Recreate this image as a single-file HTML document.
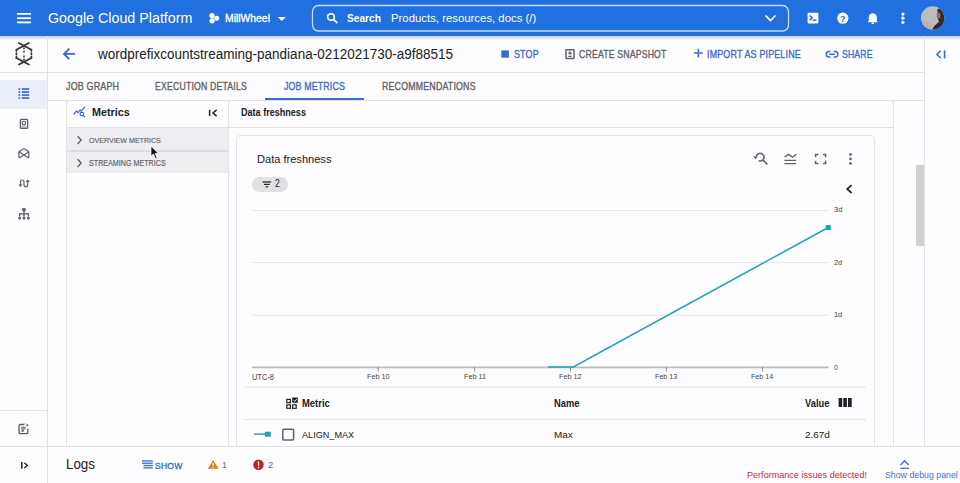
<!DOCTYPE html>
<html><head><meta charset="utf-8">
<style>
*{box-sizing:border-box;margin:0;padding:0}
html,body{width:960px;height:483px;overflow:hidden;background:#fdfcfe;font-family:"Liberation Sans",sans-serif;color:#202124}
.a{position:absolute}
.t{position:absolute;white-space:nowrap;line-height:1}
.h{position:absolute;height:1px;background:#e3e3e7}
.v{position:absolute;width:1px;background:#e3e3e7}
svg{position:absolute;overflow:visible}
</style></head><body>
<!-- top bar -->
<div class="a" style="left:0;top:0;width:960px;height:36px;background:#2070e0"></div>
<div class="a" style="left:0;top:36px;width:960px;height:4px;background:linear-gradient(rgba(0,0,0,0.2),rgba(0,0,0,0))"></div>
<svg style="left:0;top:0" width="960" height="36">
 <rect x="17" y="13" width="14" height="1.8" fill="#fff"/>
 <rect x="17" y="17.3" width="14" height="1.8" fill="#fff"/>
 <rect x="17" y="21.5" width="14" height="1.8" fill="#fff"/>
 <circle cx="212" cy="15.5" r="2.6" fill="#fff"/>
 <circle cx="212" cy="20.8" r="2.6" fill="#fff"/>
 <circle cx="216.7" cy="18.2" r="2.5" fill="#fff"/>
 <path d="M277.7 16.9 L285.8 16.9 L281.75 21 Z" fill="#fff"/>
 <rect x="312.5" y="5.5" width="476" height="25.5" rx="6" fill="none" stroke="#c9dcf8" stroke-width="1.3"/>
 <circle cx="331" cy="17" r="3.3" fill="none" stroke="#fff" stroke-width="1.6"/>
 <path d="M333.4 19.4 L337.2 23" stroke="#fff" stroke-width="1.8"/>
 <path d="M765.5 15.5 L770.5 20.5 L775.5 15.5" fill="none" stroke="#fff" stroke-width="1.7"/>
 <rect x="807.6" y="12.8" width="10.8" height="10.6" rx="1" fill="#fff"/>
 <path d="M809.6 15.5 L812.2 17.8 L809.6 20.1" fill="none" stroke="#2070e0" stroke-width="1.5"/>
 <rect x="812.6" y="19.4" width="3.8" height="1.5" fill="#2070e0"/>
 <circle cx="842.8" cy="18.2" r="5.6" fill="#fff"/>
 <text x="842.8" y="21.6" font-family="Liberation Sans" font-weight="bold" font-size="9" fill="#2070e0" text-anchor="middle">?</text>
 <path d="M868.8 21 L868.8 17.5 Q868.8 13.6 872.8 13.3 Q876.8 13.6 876.8 17.5 L876.8 21 L878 22.2 L867.6 22.2 Z" fill="#fff"/>
 <rect x="871.5" y="22.6" width="2.6" height="1.3" rx="0.6" fill="#fff"/>
 <circle cx="902.9" cy="14.1" r="1.6" fill="#fff"/>
 <circle cx="902.9" cy="18.2" r="1.6" fill="#fff"/>
 <circle cx="902.9" cy="22.3" r="1.6" fill="#fff"/>
</svg>
<svg style="left:0;top:0" width="960" height="36">
 <defs><clipPath id="av"><circle cx="932.6" cy="17.9" r="11.7"/></clipPath></defs>
 <g clip-path="url(#av)">
  <rect x="920" y="5" width="26" height="26" fill="#bdbdc0"/>
  <path d="M937.5 9 Q941 8 943 11 L945 20 L945 30 L932 30 Q934 25 939 22 Q937 18 937.5 13 Z" fill="#2e2a2a"/>
  <ellipse cx="938.6" cy="15.5" rx="2" ry="3" fill="#9a6a62"/>
  <path d="M922 19 L924 27 L933 30 L932 24 L927 22 Z" fill="#c8a898" opacity="0.7"/>
 </g>
</svg>

<!-- frame lines -->
<div class="h" style="left:0;top:72px;width:924px"></div>
<div class="h" style="left:48px;top:100px;width:876px"></div>
<div class="v" style="left:47px;top:36px;height:447px"></div>
<div class="v" style="left:924px;top:36px;height:411px"></div>
<div class="h" style="left:0;top:410px;width:47px"></div>


<!-- rail -->
<div class="a" style="left:0;top:80px;width:47px;height:29px;background:#e9eef9"></div>
<svg style="left:0;top:0" width="48" height="483">
 <g fill="none" stroke="#333" stroke-width="1.7" stroke-linecap="round">
  <path d="M18.9 42.9 L31.4 49.8 M28.9 42.9 L16.4 49.8"/>
  <path d="M16.4 57.9 L28.9 64.6 M31.4 57.9 L18.9 64.6"/>
  <path d="M16.4 49.8 L16.4 51 M16.4 53.2 L16.4 54.4 M16.4 56.6 L16.4 57.9 M31.4 49.8 L31.4 51 M31.4 53.2 L31.4 54.4 M31.4 56.6 L31.4 57.9"/>
  <path d="M24 48.2 L24 48.6 M24 51.4 L24 51.8 M24 56.2 L24 56.6 M24 59.3 L24 59.7"/>
 </g>
 <g fill="#3a6bd0">
  <rect x="18.5" y="88.2" width="1.7" height="1.7"/><rect x="21.8" y="88.2" width="7.4" height="1.7"/>
  <rect x="18.5" y="91.2" width="1.7" height="1.7"/><rect x="21.8" y="91.2" width="7.4" height="1.7"/>
  <rect x="18.5" y="94.2" width="1.7" height="1.7"/><rect x="21.8" y="94.2" width="7.4" height="1.7"/>
  <rect x="18.5" y="97.2" width="1.7" height="1.7"/><rect x="21.8" y="97.2" width="7.4" height="1.7"/>
 </g>
 <g fill="none" stroke="#5f6368" stroke-width="1.4">
  <rect x="20.4" y="119.4" width="7.2" height="8.8" rx="0.8"/>
  <circle cx="23.9" cy="123" r="1.7" stroke-width="1.1"/>
  <path d="M22.3 126 L25.5 126" stroke-width="0.8"/>
  <path d="M18.9 158 L18.9 151.7 L23.9 148.6 L28.8 151.7 L28.8 158 M19.3 151.9 L28.6 158 M28.6 151.9 L19.1 158" stroke-width="1.2"/>
  <path d="M20.5 185 L20.5 182 Q20.5 180 22.25 180 Q24 180 24 182 L24 184.8 Q24 186.8 25.85 186.8 Q27.7 186.8 27.7 184.8 L27.7 181.5" stroke-width="1.2"/>
 </g>
 <path d="M18.4 184.4 L22.6 184.4 L20.5 187 Z M25.6 182 L29.8 182 L27.7 179.3 Z" fill="#5f6368"/>
 <g fill="#5f6368">
  <circle cx="23.9" cy="209.6" r="1.95"/>
  <rect x="23.3" y="210" width="1.4" height="4"/>
  <rect x="19" y="213.2" width="10" height="1.3"/>
  <rect x="19" y="213.5" width="1.3" height="3"/><rect x="23.3" y="213.5" width="1.4" height="3"/><rect x="27.7" y="213.5" width="1.3" height="3"/>
  <circle cx="19.6" cy="218" r="1.5"/><circle cx="24" cy="218" r="1.5"/><circle cx="28.4" cy="218" r="1.5"/>
 </g>
 <g fill="none" stroke="#5f6368" stroke-width="1.4">
  <path d="M24.4 424.5 L20.3 424.5 Q19.1 424.5 19.1 425.7 L19.1 432.4 Q19.1 433.6 20.3 433.6 L26.6 433.6 Q27.8 433.6 27.8 432.4 L27.8 428.8"/>
  <path d="M21.2 427.4 L25.6 427.4 M21.2 428.8 L25.6 428.8 M21.5 430.3 L24 430.3 M21.5 431.5 L23.5 431.5" stroke-width="1.2" stroke="#777"/>
  <path d="M27.3 424.1 L27.3 426.5 M26.1 425.3 L28.5 425.3 M25.3 423.2 L25.8 423.7" stroke-width="0.9"/>
 </g>

</svg>

<!-- header icons -->
<svg style="left:0;top:0" width="960" height="100">
 <path d="M75 53.9 L64.2 53.9 M69.3 48.6 L64 53.9 L69.3 59.2" fill="none" stroke="#3567cc" stroke-width="1.8"/>
 <rect x="501.3" y="50.4" width="7.6" height="7.3" fill="#3a6bd0"/>
 <rect x="566" y="49.8" width="8" height="8.6" rx="0.3" fill="none" stroke="#5f6368" stroke-width="1.5"/>
 <path d="M570 51.3 L570 55 M568.2 53.2 L571.8 53.2 M568.3 56.3 L571.7 56.3" fill="none" stroke="#5f6368" stroke-width="1.2"/>
 <path d="M698.3 48.8 L698.3 57.6 M693.8 53.1 L702.8 53.1" stroke="#3a6bd0" stroke-width="1.5"/>
 <path d="M830.5 51.6 L828.6 51.6 Q826.3 51.6 826.3 54.25 Q826.3 56.9 828.6 56.9 L830.5 56.9 M833.6 51.6 L835.5 51.6 Q837.8 51.6 837.8 54.25 Q837.8 56.9 835.5 56.9 L833.6 56.9 M829.3 54.25 L834.8 54.25" fill="none" stroke="#3a6bd0" stroke-width="1.5"/>
 <path d="M940.6 50.8 L937 54.4 L940.6 58" fill="none" stroke="#3a6bd0" stroke-width="1.6"/>
 <path d="M944.6 50.4 L944.6 58.4" stroke="#3a6bd0" stroke-width="1.6"/>
 <rect x="265" y="98" width="99" height="2" fill="#3a6bd0"/>
</svg>

<!-- metrics panel -->
<div class="v" style="left:66px;top:100px;height:347px"></div>
<div class="v" style="left:228px;top:100px;height:347px"></div>
<div class="a" style="left:67px;top:127px;width:161px;height:46px;background:#eeeef1"></div>
<div class="h" style="left:67px;top:127px;width:161px;background:#e2e2e6"></div>
<div class="h" style="left:67px;top:150px;width:161px;height:2px;background:#dedee2"></div>
<svg style="left:0;top:0" width="240" height="200">
 <path d="M73.6 114.4 L76.6 110.9 L77.8 112.8 L80 110 L81.1 111.2 L84.9 106.9" fill="none" stroke="#3a6bd0" stroke-width="1.2" stroke-linejoin="round"/>
 <rect x="80.2" y="112.3" width="3.4" height="3.4" rx="1.2" fill="none" stroke="#3a6bd0" stroke-width="1.2"/>
 <path d="M83.2 115.3 L84.9 117.1" stroke="#3a6bd0" stroke-width="1.3"/>
 <path d="M209.6 109.8 L209.6 116" stroke="#202124" stroke-width="1.5"/>
 <path d="M216.6 109.9 L213 113 L216.6 116.1" fill="none" stroke="#202124" stroke-width="1.5"/>
 <path d="M77.6 136.3 L81.2 140.1 L77.6 143.9" fill="none" stroke="#5f6368" stroke-width="1.4"/>
 <path d="M77.6 159.3 L81.2 163.1 L77.6 166.9" fill="none" stroke="#5f6368" stroke-width="1.4"/>
 <path d="M151 146.3 L151 156.2 L153.4 154 L155.6 158.8 L157.1 158.1 L155.1 153.4 L158.3 153.2 Z" fill="#111" stroke="#fff" stroke-width="0.7"/>
</svg>

<!-- content header -->
<div class="h" style="left:228px;top:127px;width:665px"></div>
<div class="v" style="left:893px;top:100px;height:347px"></div>
<div class="a" style="left:916.3px;top:164.5px;width:7.3px;height:81.2px;background:#d0d0d2"></div>

<!-- card -->
<div class="a" style="left:235.5px;top:134.8px;width:639.5px;height:330px;border:1px solid #e4e4e8;border-radius:4px"></div>
<div class="a" style="left:252px;top:177px;width:36px;height:14.6px;border-radius:7.3px;background:#e1e1e4"></div>
<svg style="left:0;top:0" width="960" height="483">
 <g fill="#202124"><rect x="262.5" y="181.4" width="8.7" height="1.2"/><rect x="264" y="183.8" width="5.7" height="1.2"/><rect x="265.6" y="186.2" width="2.5" height="1.2"/></g>
 <g fill="none" stroke="#5f6368" stroke-width="1.5">
  <path d="M758.6 160.8 A3.9 3.9 0 1 0 756.4 156" stroke-width="1.5"/>
  <path d="M763 160 L767.3 164.3" stroke-width="1.7"/>
 </g>
 <g fill="none" stroke="#5f6368" stroke-width="1.3">
  <path d="M784.5 157 L788.6 154.4 L792.5 157.2 L796.4 154.2" stroke-width="1.4"/>
  <path d="M784.5 160.4 L796.2 160.4 M784.5 163.6 L796.2 163.6" stroke-width="1.4"/>
  <path d="M815.6 157.2 L815.6 154.5 L818.4 154.5 M823 154.5 L825.6 154.5 L825.6 157.2 M825.6 160.8 L825.6 163.5 L823 163.5 M818.4 163.5 L815.6 163.5 L815.6 160.8" stroke-width="1.5"/>
 </g>
 <path d="M753.2 156.3 L758 156.3 L755.5 159.2 Z" fill="#5f6368"/>
 <g fill="#5f6368"><circle cx="850.5" cy="154.4" r="1.3"/><circle cx="850.5" cy="158.9" r="1.3"/><circle cx="850.5" cy="163.4" r="1.3"/></g>
 <path d="M851.6 185.2 L847.2 189.1 L851.6 193" fill="none" stroke="#202124" stroke-width="1.7"/>
 <g fill="#e6e6e8"><rect x="252" y="210" width="576.5" height="1"/><rect x="252" y="262" width="576.5" height="1"/><rect x="252" y="314.7" width="576.5" height="1"/></g>
 <rect x="252" y="366.5" width="576.5" height="1.8" fill="#bcbcbe"/>
 <g fill="#8a8a8c"><rect x="377.8" y="367" width="1" height="4.5"/><rect x="474.2" y="367" width="1" height="4.5"/><rect x="570" y="367" width="1" height="4.5"/><rect x="665.8" y="367" width="1" height="4.5"/><rect x="762.1" y="367" width="1" height="4.5"/></g>
 <path d="M548 367 L573.3 367 L828.3 227.5" fill="none" stroke="#1ba5b2" stroke-width="1.5"/>
 <rect x="825.8" y="225" width="5" height="5" fill="#1ba5b2"/>
 <g fill="#e4e4e8"><rect x="245" y="386.6" width="621" height="1"/><rect x="245" y="419" width="621" height="1"/></g>
 <g fill="#202124">
  <rect x="286.8" y="399.4" width="3.6" height="3.3" fill="none" stroke="#202124" stroke-width="1.2"/>
  <rect x="286.8" y="404.9" width="3.6" height="3.4" fill="none" stroke="#202124" stroke-width="1.2"/>
  <rect x="292.6" y="404.9" width="3.6" height="3.4" fill="none" stroke="#202124" stroke-width="1.2"/>
  <rect x="292.2" y="397.4" width="5.6" height="5.4" rx="0.4"/>
  <path d="M293.4 400.2 L294.8 401.5 L296.8 398.9" stroke="#fff" stroke-width="0.9" fill="none"/>
  <rect x="838.6" y="398" width="3.6" height="9"/><rect x="843.3" y="398" width="3.6" height="9"/><rect x="848" y="398" width="3.7" height="9"/>
 </g>
 <rect x="254.2" y="433.4" width="11" height="1.5" fill="#1ba5b2"/>
 <rect x="265" y="431.7" width="5.8" height="5" fill="#1ba5b2"/>
 <rect x="282.8" y="429.3" width="10.8" height="10.6" rx="1" fill="none" stroke="#5f6368" stroke-width="1.5"/>
</svg>

<!-- logs bar -->
<div class="a" style="left:0;top:446px;width:960px;height:37px;background:#fdfcfe"></div>
<div class="h" style="left:0;top:446px;width:960px"></div>
<div class="v" style="left:47px;top:446px;height:37px"></div>
<svg style="left:0;top:0" width="960" height="483">
 <g fill="none" stroke="#202124" stroke-width="1.5">
  <path d="M21.8 462 L21.8 468.7" stroke-width="1.5"/>
  <path d="M24.4 462.7 L27.3 465.4 L24.4 468.1" stroke-width="1.4"/>
 </g>
 <g fill="#3a6bd0"><rect x="142" y="460.3" width="10.8" height="1.3"/><rect x="142" y="462.6" width="10.8" height="1.3"/><rect x="143.5" y="464.9" width="9.3" height="1.3"/><rect x="143.5" y="467.2" width="9.3" height="1.3"/></g>
 <path d="M213.2 460.3 L218.6 468.8 L207.8 468.8 Z" fill="#e07a1f"/>
 <rect x="212.6" y="463" width="1.2" height="3" fill="#fff"/><rect x="212.6" y="466.8" width="1.2" height="1.1" fill="#fff"/>
 <circle cx="258.5" cy="464.8" r="5.2" fill="#c71b1d"/>
 <rect x="257.8" y="461.5" width="1.4" height="4.2" fill="#fff"/><rect x="257.8" y="466.8" width="1.4" height="1.4" fill="#fff"/>
 <path d="M900.5 465 L904.6 460.8 L908.7 465" fill="none" stroke="#4a72c8" stroke-width="1.5"/>
 <rect x="900.2" y="467.6" width="8.8" height="1.3" fill="#4a72c8"/>
</svg>
<div class="t" style="left:47.50px;top:11.00px;font-size:14.65px;font-weight:400;color:#fff;letter-spacing:0.000px;transform:scaleX(0.9749);transform-origin:0 0;">Google Cloud Platform</div>
<div class="t" style="left:224.60px;top:13.42px;font-size:10.60px;font-weight:400;color:#fff;letter-spacing:0.000px;transform:scaleX(0.9789);transform-origin:0 0;-webkit-text-stroke:0.35px #fff;">MillWheel</div>
<div class="t" style="left:346.90px;top:12.81px;font-size:11.44px;font-weight:700;color:#fff;letter-spacing:0.000px;transform:scaleX(0.8883);transform-origin:0 0;">Search</div>
<div class="t" style="left:390.80px;top:12.81px;font-size:11.44px;font-weight:400;color:#fff;letter-spacing:0.000px;transform:scaleX(0.9936);transform-origin:0 0;">Products, resources, docs (/)</div>
<div class="t" style="left:97.67px;top:47.55px;font-size:13.88px;font-weight:400;color:#202124;letter-spacing:0.000px;transform:scaleX(0.9731);transform-origin:0 0;">wordprefixcountstreaming-pandiana-0212021730-a9f88515</div>
<div class="t" style="left:514.40px;top:48.82px;font-size:10.97px;font-weight:400;color:#3a6bd0;letter-spacing:0.219px;transform:scaleX(0.8123);transform-origin:0 0;-webkit-text-stroke:0.35px #3a6bd0;">STOP</div>
<div class="t" style="left:579.40px;top:48.82px;font-size:10.97px;font-weight:400;color:#5f6368;letter-spacing:0.219px;transform:scaleX(0.7934);transform-origin:0 0;-webkit-text-stroke:0.35px #5f6368;">CREATE SNAPSHOT</div>
<div class="t" style="left:707.29px;top:48.82px;font-size:10.97px;font-weight:400;color:#3a6bd0;letter-spacing:0.219px;transform:scaleX(0.8112);transform-origin:0 0;-webkit-text-stroke:0.35px #3a6bd0;">IMPORT AS PIPELINE</div>
<div class="t" style="left:841.90px;top:48.82px;font-size:10.97px;font-weight:400;color:#3a6bd0;letter-spacing:0.219px;transform:scaleX(0.7857);transform-origin:0 0;-webkit-text-stroke:0.35px #3a6bd0;">SHARE</div>
<div class="t" style="left:66.25px;top:81.60px;font-size:10.40px;font-weight:400;color:#5f6368;letter-spacing:0.208px;transform:scaleX(0.8589);transform-origin:0 0;-webkit-text-stroke:0.35px #5f6368;">JOB GRAPH</div>
<div class="t" style="left:155.40px;top:81.60px;font-size:10.40px;font-weight:400;color:#5f6368;letter-spacing:0.208px;transform:scaleX(0.8391);transform-origin:0 0;-webkit-text-stroke:0.35px #5f6368;">EXECUTION DETAILS</div>
<div class="t" style="left:284.25px;top:81.60px;font-size:10.40px;font-weight:400;color:#3a6bd0;letter-spacing:0.208px;transform:scaleX(0.8448);transform-origin:0 0;-webkit-text-stroke:0.35px #3a6bd0;">JOB METRICS</div>
<div class="t" style="left:382.00px;top:81.60px;font-size:10.40px;font-weight:400;color:#5f6368;letter-spacing:0.208px;transform:scaleX(0.8499);transform-origin:0 0;-webkit-text-stroke:0.35px #5f6368;">RECOMMENDATIONS</div>
<div class="t" style="left:92.40px;top:107.10px;font-size:10.86px;font-weight:700;color:#202124;letter-spacing:0.000px;transform:scaleX(0.9951);transform-origin:0 0;">Metrics</div>
<div class="t" style="left:88.90px;top:136.70px;font-size:8.04px;font-weight:400;color:#606266;letter-spacing:0.000px;transform:scaleX(0.8814);transform-origin:0 0;-webkit-text-stroke:0.15px #606266;">OVERVIEW METRICS</div>
<div class="t" style="left:88.90px;top:159.60px;font-size:8.16px;font-weight:400;color:#606266;letter-spacing:0.000px;transform:scaleX(0.8764);transform-origin:0 0;-webkit-text-stroke:0.15px #606266;">STREAMING METRICS</div>
<div class="t" style="left:240.80px;top:108.00px;font-size:10.05px;font-weight:700;color:#202124;letter-spacing:0.000px;transform:scaleX(0.9012);transform-origin:0 0;">Data freshness</div>
<div class="t" style="left:256.70px;top:153.60px;font-size:11.22px;font-weight:400;color:#202124;letter-spacing:0.000px;transform:scaleX(0.9862);transform-origin:0 0;">Data freshness</div>
<div class="t" style="left:275.00px;top:179.17px;font-size:10.43px;font-weight:400;color:#202124;letter-spacing:0.000px;transform:scaleX(0.8200);transform-origin:0 0;">2</div>
<div class="t" style="left:834.00px;top:206.36px;font-size:7.85px;font-weight:400;color:#454545;letter-spacing:0.000px;transform:scaleX(0.9577);transform-origin:0 0;">3d</div>
<div class="t" style="left:834.20px;top:258.73px;font-size:7.99px;font-weight:400;color:#454545;letter-spacing:0.000px;transform:scaleX(0.9241);transform-origin:0 0;">2d</div>
<div class="t" style="left:834.20px;top:310.83px;font-size:7.99px;font-weight:400;color:#454545;letter-spacing:0.000px;transform:scaleX(0.9241);transform-origin:0 0;">1d</div>
<div class="t" style="left:834.20px;top:364.18px;font-size:7.70px;font-weight:400;color:#454545;letter-spacing:0.000px;transform:scaleX(0.8750);transform-origin:0 0;">0</div>
<div class="t" style="left:252.00px;top:372.96px;font-size:8.31px;font-weight:400;color:#454545;letter-spacing:0.000px;transform:scaleX(0.8946);transform-origin:0 0;">UTC-8</div>
<div class="t" style="left:366.70px;top:373.22px;font-size:8.01px;font-weight:400;color:#454545;letter-spacing:0.000px;transform:scaleX(0.9035);transform-origin:0 0;">Feb 10</div>
<div class="t" style="left:463.50px;top:373.22px;font-size:8.01px;font-weight:400;color:#454545;letter-spacing:0.000px;transform:scaleX(0.9010);transform-origin:0 0;">Feb 11</div>
<div class="t" style="left:558.70px;top:373.22px;font-size:8.01px;font-weight:400;color:#454545;letter-spacing:0.000px;transform:scaleX(0.9035);transform-origin:0 0;">Feb 12</div>
<div class="t" style="left:654.70px;top:373.22px;font-size:8.01px;font-weight:400;color:#454545;letter-spacing:0.000px;transform:scaleX(0.8956);transform-origin:0 0;">Feb 13</div>
<div class="t" style="left:750.70px;top:373.22px;font-size:8.01px;font-weight:400;color:#454545;letter-spacing:0.000px;transform:scaleX(0.8878);transform-origin:0 0;">Feb 14</div>
<div class="t" style="left:301.70px;top:397.71px;font-size:10.73px;font-weight:700;color:#202124;letter-spacing:0.000px;transform:scaleX(0.8795);transform-origin:0 0;">Metric</div>
<div class="t" style="left:554.20px;top:397.71px;font-size:10.73px;font-weight:700;color:#202124;letter-spacing:0.000px;transform:scaleX(0.8723);transform-origin:0 0;">Name</div>
<div class="t" style="left:805.00px;top:397.71px;font-size:10.73px;font-weight:700;color:#202124;letter-spacing:0.000px;transform:scaleX(0.8701);transform-origin:0 0;">Value</div>
<div class="t" style="left:302.00px;top:429.66px;font-size:9.74px;font-weight:400;color:#202124;letter-spacing:0.000px;transform:scaleX(0.9350);transform-origin:0 0;">ALIGN_MAX</div>
<div class="t" style="left:554.20px;top:429.66px;font-size:9.74px;font-weight:400;color:#202124;letter-spacing:0.000px;transform:scaleX(1.0162);transform-origin:0 0;">Max</div>
<div class="t" style="left:805.00px;top:429.66px;font-size:9.74px;font-weight:400;color:#202124;letter-spacing:0.000px;transform:scaleX(1.0203);transform-origin:0 0;">2.67d</div>
<div class="t" style="left:65.93px;top:457.94px;font-size:13.77px;font-weight:400;color:#202124;letter-spacing:0.000px;transform:scaleX(0.9701);transform-origin:0 0;">Logs</div>
<div class="t" style="left:154.50px;top:460.74px;font-size:9.40px;font-weight:400;color:#3a6bd0;letter-spacing:0.188px;transform:scaleX(0.9193);transform-origin:0 0;-webkit-text-stroke:0.35px #3a6bd0;">SHOW</div>
<div class="t" style="left:222.30px;top:460.15px;font-size:9.98px;font-weight:400;color:#3a6bd0;letter-spacing:0.000px;transform:scaleX(0.8200);transform-origin:0 0;">1</div>
<div class="t" style="left:267.50px;top:460.15px;font-size:9.98px;font-weight:400;color:#3a6bd0;letter-spacing:0.000px;transform:scaleX(0.9167);transform-origin:0 0;">2</div>
<div class="t" style="left:746.80px;top:469.71px;font-size:9.68px;font-weight:400;color:#c42d3e;letter-spacing:0.000px;transform:scaleX(0.9374);transform-origin:0 0;">Performance issues detected!</div>
<div class="t" style="left:884.50px;top:469.71px;font-size:9.68px;font-weight:400;color:#4a72c8;letter-spacing:0.000px;transform:scaleX(0.9077);transform-origin:0 0;">Show debug panel</div>
</body></html>
